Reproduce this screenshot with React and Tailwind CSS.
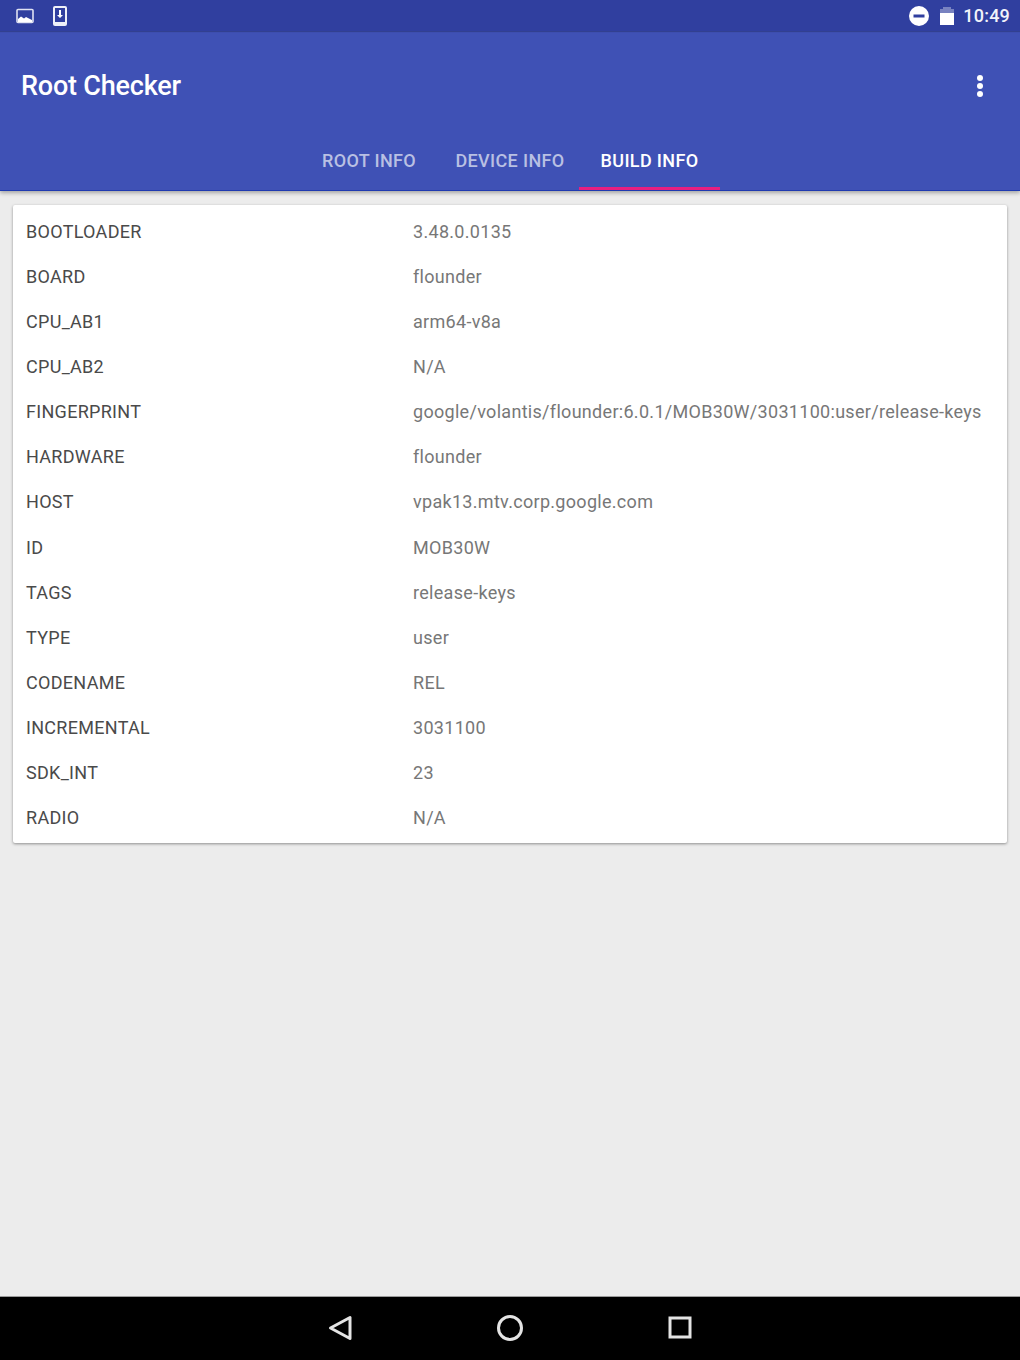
import React from 'react';

const buildInfo = [
  ['BOOTLOADER', '3.48.0.0135'],
  ['BOARD', 'flounder'],
  ['CPU_AB1', 'arm64-v8a'],
  ['CPU_AB2', 'N/A'],
  ['FINGERPRINT', 'google/volantis/flounder:6.0.1/MOB30W/3031100:user/release-keys'],
  ['HARDWARE', 'flounder'],
  ['HOST', 'vpak13.mtv.corp.google.com'],
  ['ID', 'MOB30W'],
  ['TAGS', 'release-keys'],
  ['TYPE', 'user'],
  ['CODENAME', 'REL'],
  ['INCREMENTAL', '3031100'],
  ['SDK_INT', '23'],
  ['RADIO', 'N/A'],
];

const StatusBar = () => (
  <div className="h-[31px] bg-[#303f9f] flex items-center justify-between pl-[16px] pr-[10px] shadow-[0_1px_1px_rgba(0,0,0,0.2)] relative">
    <div className="flex items-center gap-[17px]">
      <svg width="19" height="16" viewBox="0 0 19 16">
        <rect x="1" y="1.5" width="16" height="13" rx="1" fill="none" stroke="#dfe2f2" strokeWidth="1.6" />
        <path d="M2 13V6h14v7z" fill="#303f9f" />
        <path d="M2 14v-3l3-2.5 3 2 2-1.5 6 3v2z" fill="#fff" />
      </svg>
      <svg width="16" height="22" viewBox="0 0 16 22">
        <rect x="1" y="1" width="14" height="20" rx="2" fill="#eef0f8" />
        <rect x="3" y="3" width="10" height="14" fill="#303f9f" />
        <path d="M7 5h2v5h2l-3 3-3-3h2z" fill="#fff" />
      </svg>
    </div>
    <div className="flex items-center">
      <svg width="22" height="22" viewBox="0 0 22 22" className="mr-[9px]">
        <circle cx="11" cy="11" r="10" fill="#fff" />
        <rect x="5.5" y="9.5" width="11" height="3" fill="#303f9f" />
      </svg>
      <svg width="16" height="20" viewBox="0 0 16 20" className="mr-[8px]">
        <path d="M4 1h8v2h3v16H1V3h3z" fill="#fff" fillOpacity="0.35" />
        <rect x="1" y="7" width="14" height="12" fill="#fff" />
      </svg>
      <span className="font-['Roboto',sans-serif] text-[18px] leading-none font-medium tracking-[0.2px] text-[#f2f3fa]">10:49</span>
    </div>
  </div>
);

const Toolbar = () => (
  <div className="bg-[#3f51b5] h-[160px] flex flex-col">
    <div className="flex items-center justify-between h-[110px] pl-[21px] pr-[37px]">
      <span className="font-['Roboto',sans-serif] text-[27px] font-medium text-white tracking-[-0.2px]">Root Checker</span>
      <div className="flex flex-col gap-[2px]">
        <div className="w-[6px] h-[6px] rounded-full bg-white" />
        <div className="w-[6px] h-[6px] rounded-full bg-white" />
        <div className="w-[6px] h-[6px] rounded-full bg-white" />
      </div>
    </div>
    <div className="flex justify-center h-[50px] border-b-[1px] border-[#1f3ab0] pr-[2px] font-['Roboto',sans-serif] text-[18px] font-medium tracking-[0.35px]">
      <div className="w-[140px] flex items-center justify-center text-[#b9c0e3] pl-[2px] pb-[11px]">ROOT INFO</div>
      <div className="w-[141px] flex items-center justify-center text-[#b9c0e3] pl-[3px] pb-[11px]">DEVICE INFO</div>
      <div className="w-[141px] flex items-center justify-center text-white pb-[8px] border-b-[3px] border-[#e91e80]">BUILD INFO</div>
    </div>
  </div>
);

const NavBar = () => (
  <div className="h-[64px] bg-black border-t-[1px] border-[#9a9a9a] pb-[2px] flex items-center justify-center gap-[130px]">
    <svg width="40" height="40" viewBox="0 0 40 40">
      <path d="M30 9.5v21L10.5 20z" fill="none" stroke="#e4e4e4" strokeWidth="3" strokeLinejoin="round" />
    </svg>
    <svg width="40" height="40" viewBox="0 0 40 40">
      <circle cx="20" cy="20" r="11.5" fill="none" stroke="#e4e4e4" strokeWidth="3" />
    </svg>
    <svg width="40" height="40" viewBox="0 0 40 40">
      <rect x="10" y="10" width="20" height="19" fill="none" stroke="#e4e4e4" strokeWidth="3" />
    </svg>
  </div>
);

export default function App() {
  return (
    <div className="w-[1020px] h-[1360px] flex flex-col bg-[#ececec] overflow-hidden">
      <div className="shadow-[0_2px_4px_rgba(0,0,0,0.3)] relative">
        <StatusBar />
        <Toolbar />
      </div>
      <div className="flex-1 pt-[14px] px-[13px]">
        <div className="bg-white rounded-[2px] shadow-[0_1px_3px_rgba(0,0,0,0.4)] pt-[3.8px] pb-[2.8px] font-['Roboto',sans-serif] text-[18px] tracking-[0.3px]">
          {buildInfo.map(([name, value]) => (
            <div key={name} className="flex items-center h-[45.1px] pl-[13px]">
              <div className="w-[387px] text-[#4a4a4a]">{name}</div>
              <div className="text-[#777777] whitespace-nowrap">{value}</div>
            </div>
          ))}
        </div>
      </div>
      <NavBar />
    </div>
  );
}
